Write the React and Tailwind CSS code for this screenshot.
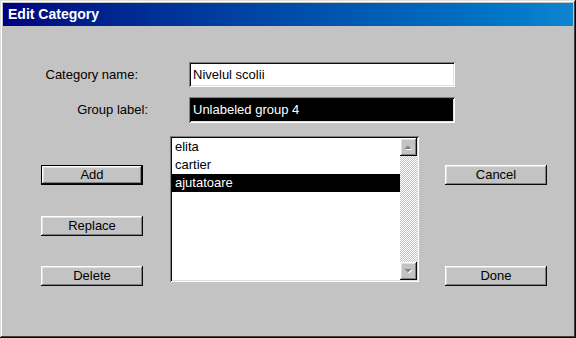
import React from "react";

const raised =
  "shadow-[inset_-1px_-1px_#0a0a0a,inset_1px_1px_#ffffff,inset_-2px_-2px_#808080,inset_2px_2px_#dfdfdf]";
const sunken =
  "shadow-[inset_1px_1px_#808080,inset_-1px_-1px_#ffffff,inset_2px_2px_#0a0a0a,inset_-2px_-2px_#dfdfdf]";

const Button = ({ label, isDefault }) => (
  <div
    className={`w-[102px] h-[20px] ${
      isDefault ? "border border-black" : ""
    } bg-[#c3c3c3]`}
  >
    <div
      className={`w-full h-full flex items-center justify-center text-[13px] text-black ${raised}`}
    >
      {label}
    </div>
  </div>
);

const ScrollArrow = ({ up }) => (
  <div className={`w-[17px] h-[18px] bg-[#c3c3c3] flex items-center justify-center ${raised}`}>
    <svg width="9" height="5" viewBox="0 0 9 5">
      {up ? (
        <>
          <path d="M1.5 5 L5 1.5 L8.5 5 Z" fill="#ffffff" />
          <path d="M0.5 4 L4 0.5 L7.5 4 Z" fill="#808080" />
        </>
      ) : (
        <>
          <path d="M1.5 1 L5 4.5 L8.5 1 Z" fill="#ffffff" />
          <path d="M0.5 0 L4 3.5 L7.5 0 Z" fill="#808080" />
        </>
      )}
    </svg>
  </div>
);

const App = () => {
  const items = ["elita", "cartier", "ajutatoare"];
  const selected = 2;

  return (
    <div
      className="w-[576px] h-[338px] bg-[#c3c3c3] p-[3px] flex flex-col shadow-[inset_-1px_-1px_#0a0a0a,inset_1px_1px_#dfdfdf,inset_-2px_-2px_#404040,inset_2px_2px_#ffffff]"
      style={{ fontFamily: '"Liberation Sans", Arial, sans-serif' }}
    >
      {/* Title bar */}
      <div className="h-[23px] bg-gradient-to-r from-[#000080] to-[#1084d0] flex items-center pl-[5px]">
        <span className="text-white font-bold text-[14px]">Edit Category</span>
      </div>

      {/* Body */}
      <div className="flex-1 flex flex-col text-[13px] text-black">
        <div className="flex items-center mt-[36px] h-[25px]">
          <div className="w-[135px] text-right">Category name:</div>
          <div className={`ml-[51px] w-[266px] h-[25px] bg-white flex items-center pl-[4px] ${sunken}`}>
            Nivelul scolii
          </div>
        </div>
        <div className="flex items-center mt-[10px] h-[26px]">
          <div className="w-[145px] text-right">Group label:</div>
          <div className={`ml-[41px] w-[266px] h-[26px] bg-black text-white flex items-center pl-[4px] ${sunken}`}>
            Unlabeled group 4
          </div>
        </div>

        <div className="flex items-start mt-[13px]">
          <div className="ml-[38px] pt-[29px] flex flex-col">
            <Button label="Add" isDefault />
            <div className="mt-[31px]">
              <Button label="Replace" />
            </div>
            <div className="mt-[30px]">
              <Button label="Delete" />
            </div>
          </div>

          {/* List box */}
          <div className={`ml-[27px] w-[249px] h-[146px] bg-white p-[2px] flex ${sunken}`}>
            <div className="flex-1 flex flex-col">
              {items.map((item, i) => (
                <div
                  key={item}
                  className={`h-[18px] flex items-center pl-[3px] ${
                    i === selected ? "bg-black text-white" : ""
                  }`}
                >
                  {item}
                </div>
              ))}
            </div>
            <div className="w-[17px] flex flex-col bg-[repeating-conic-gradient(#c3c3c3_0%_25%,#ffffff_0%_50%)] bg-[length:2px_2px]">
              <ScrollArrow up />
              <div className="flex-1" />
              <ScrollArrow />
            </div>
          </div>

          <div className="ml-[26px] pt-[29px] flex flex-col">
            <Button label="Cancel" />
            <div className="mt-[81px]">
              <Button label="Done" />
            </div>
          </div>
        </div>
      </div>
    </div>
  );
};

export default App;
